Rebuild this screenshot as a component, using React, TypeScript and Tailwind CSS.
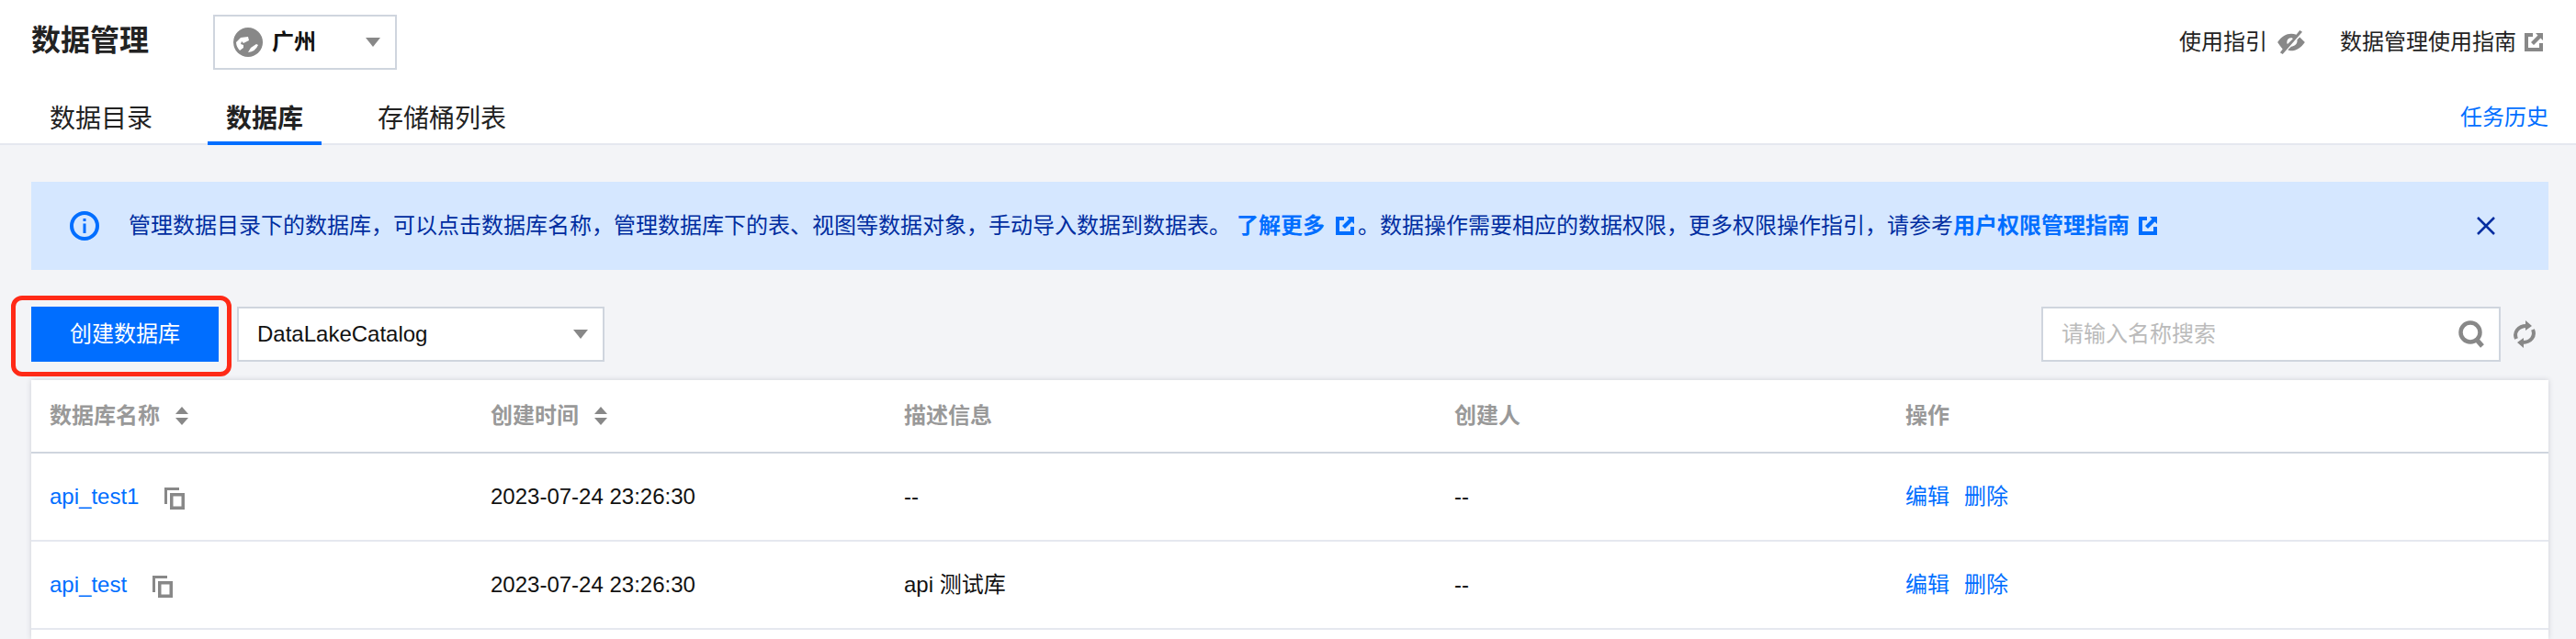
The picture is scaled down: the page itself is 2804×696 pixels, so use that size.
function ExternalIcon({ className }: { className: string }) {
  return (
    <svg viewBox="0 0 20 20" className={className}>
      <path fill="currentColor" d="M0 0h9v4H4v12h12v-5h4v9H0z" />
      <path fill="currentColor" d="M12 0h8v8l-2.500-2.500L10 13l-3-3 7.500-7.500z" />
    </svg>
  )
}

function CopyIcon() {
  return (
    <svg viewBox="0 0 22 24" className="h-6 w-[22px] text-[#888]">
      <path fill="currentColor" fillRule="evenodd" d="M0 0h16v3H3v15H0zM6 6h16v18H6zM9.500 9.500v11h9v-11z" />
    </svg>
  )
}

function SortIcon() {
  return (
    <svg viewBox="0 0 16 20" className="h-5 w-4 text-[#888]">
      <path fill="currentColor" d="M8 0l7 8H1zM8 20l-7-8h14z" />
    </svg>
  )
}

function Arrow() {
  return (
    <svg viewBox="0 0 16 10" className="h-[10px] w-4 text-[#888]">
      <path fill="currentColor" d="M0 0h16L8 10z" />
    </svg>
  )
}

const rows = [
  { name: 'api_test1', desc: '--' },
  { name: 'api_test', desc: 'api 测试库' },
]

const gridCols = 'grid grid-cols-[480px_450px_599px_491px_1fr]'

export default function App() {
  return (
    <div className="flex h-[696px] w-[2804px] flex-col overflow-hidden bg-[#f3f4f7] font-['Liberation_Sans','Noto_Sans_CJK_SC',sans-serif] text-2xl text-black">
      <header className="h-[158px] shrink-0 border-b-2 border-[#e5e8ef] bg-white">
        <div className="flex h-[92px] items-center pl-[34px] pr-[36px]">
          <h1 className="mb-1 w-[198px] text-[32px] font-bold leading-none text-[#222]">数据管理</h1>
          <div className="flex h-[60px] w-[200px] items-center border-2 border-[#cfd5de] pl-5 pr-[16px]">
            <svg viewBox="0 0 32 32" className="h-8 w-8 shrink-0">
              <circle cx="16" cy="16" r="16" fill="#888" />
              <path fill="#fff" d="M3 16l5-5 8-1 1 4-4 2-2 1-2-2-1 3 3 1 0 3-4 3a14 14 0 0 1-4-9zM16 27l3-5 6-4 2 1a13 13 0 0 1-11 8z" />
            </svg>
            <span className="ml-[10px] font-bold leading-none text-[#111]">广州</span>
            <span className="ml-auto"><Arrow /></span>
          </div>
          <div className="ml-auto flex items-center leading-none text-[#222]">
            <span>使用指引</span>
            <svg viewBox="0 0 32 28" className="ml-[10px] h-[26px] w-8 text-[#888]">
              <path fill="currentColor" fillRule="evenodd" d="M0 14C5 7 10 4 16 4c2 0 4 .4 6 1l4-5 3 2L6 28l-3-2 3-4c-2-2-4-5-6-8zM26 8c2 2 4 4 6 6-5 7-10 10-16 10-1 0-3 0-4-1l4-4c4 0 7-3 7-6 0-1 0-1 0-2zM16 9c-3 0-5 2-5 5 0 1 0 2 1 2l6-6c-1-1-1-1-2-1z" />
            </svg>
            <span className="ml-[37px]">数据管理使用指南</span>
            <ExternalIcon className="ml-[9px] h-5 w-5 text-[#888]" />
          </div>
        </div>
        <div className="flex h-[64px] items-start pl-[54px] pr-[30px] text-[28px] leading-none text-[#222]">
          <span className="mt-[24px] w-[192px]">数据目录</span>
          <span className="relative mt-[24px] w-[165px] font-bold">
            数据库
            <span className="absolute left-[-20px] top-[38px] h-1 w-[124px] bg-[#006eff]" />
          </span>
          <span className="mt-[24px]">存储桶列表</span>
          <span className="ml-auto mt-[20px] text-2xl text-[#006eff]">任务历史</span>
        </div>
      </header>

      <main className="flex flex-1 flex-col pl-[34px] pr-[30px] pt-10">
        <div className="flex h-[96px] items-center bg-[#d5e7ff] pl-[42px] pr-[58px] text-[#002da0]">
          <svg viewBox="0 0 32 32" className="h-8 w-8 shrink-0 text-[#006eff]">
            <circle cx="16" cy="16" r="14" fill="none" stroke="currentColor" strokeWidth="4" />
            <path fill="currentColor" d="M14.500 8h3v3h-3zM14.500 13.500h3V24h-3z" />
          </svg>
          <p className="ml-[32px] whitespace-nowrap leading-none">
            管理数据目录下的数据库，可以点击数据库名称，管理数据库下的表、视图等数据对象，手动导入数据到数据表。
            <span className="ml-[6px] font-bold text-[#006eff]">了解更多</span>
            <ExternalIcon className="ml-3 mr-1 inline-block h-5 w-5 align-[-2px] text-[#006eff]" />
            。数据操作需要相应的数据权限，更多权限操作指引，请参考
            <span className="font-bold text-[#006eff]">用户权限管理指南</span>
            <ExternalIcon className="ml-[10px] inline-block h-5 w-5 align-[-2px] text-[#006eff]" />
          </p>
          <svg viewBox="0 0 20 20" className="ml-auto h-5 w-5 text-[#002da0]">
            <path stroke="currentColor" strokeWidth="2.500" d="M1 1l18 18M19 1L1 19" />
          </svg>
        </div>

        <div className="mt-10 flex h-[60px] items-center">
          <div className="relative">
            <button className="h-[60px] w-[204px] bg-[#006eff] text-white">创建数据库</button>
            <span className="absolute left-[-22px] top-[-12px] h-[88px] w-[240px] rounded-[12px] border-[5px] border-[#ff2a17]" />
          </div>
          <div className="ml-5 flex h-[60px] w-[400px] items-center justify-between border-2 border-[#cfd5de] bg-white pl-5 pr-[16px] text-[#111]">
            <span>DataLakeCatalog</span>
            <Arrow />
          </div>
          <div className="ml-auto flex h-[60px] w-[500px] items-center justify-between border-2 border-[#cfd5de] bg-white pl-[20px] pr-[16px] text-[#bbb]">
            <span>请输入名称搜索</span>
            <svg viewBox="0 0 28 30" className="h-[30px] w-7 text-[#888]">
              <circle cx="13" cy="13" r="10.500" fill="none" stroke="currentColor" strokeWidth="4.500" />
              <path stroke="currentColor" strokeWidth="5" d="M19 20l7 8" />
            </svg>
          </div>
          <div className="flex w-[52px] justify-center">
            <svg viewBox="0 0 24 30" className="h-[30px] w-6 text-[#888]">
              <path fill="none" stroke="currentColor" strokeWidth="4" d="M3 20C0 13 5 6 14 6M21 10c3 7-2 14-11 14" />
              <path fill="currentColor" d="M13 0l7 6-7 5zM11 19v11l-7-6z" />
            </svg>
          </div>
        </div>

        <div className="mt-5 flex-1 bg-white shadow-[0_0_6px_rgba(54,58,80,0.2)]">
          <div className={`${gridCols} h-20 items-center border-b-2 border-[#cfd5de] font-bold text-[#999]`}>
            <div className="flex items-center pl-5">
              数据库名称
              <span className="ml-4"><SortIcon /></span>
            </div>
            <div className="flex items-center pl-5">
              创建时间
              <span className="ml-4"><SortIcon /></span>
            </div>
            <div className="pl-5">描述信息</div>
            <div className="pl-5">创建人</div>
            <div className="pl-5">操作</div>
          </div>
          {rows.map(row => (
            <div key={row.name} className={`${gridCols} h-[96px] items-center border-b-2 border-[#e5e8ef]`}>
              <div className="flex items-center pl-5 text-[#006eff]">
                {row.name}
                <span className="ml-[28px] mt-1"><CopyIcon /></span>
              </div>
              <div className="pl-5 text-[#111]">2023-07-24 23:26:30</div>
              <div className="pl-5 text-[#111]">{row.desc}</div>
              <div className="pl-5 text-[#111]">--</div>
              <div className="flex gap-4 pl-5 text-[#006eff]">
                <span>编辑</span>
                <span>删除</span>
              </div>
            </div>
          ))}
        </div>
      </main>
    </div>
  )
}
